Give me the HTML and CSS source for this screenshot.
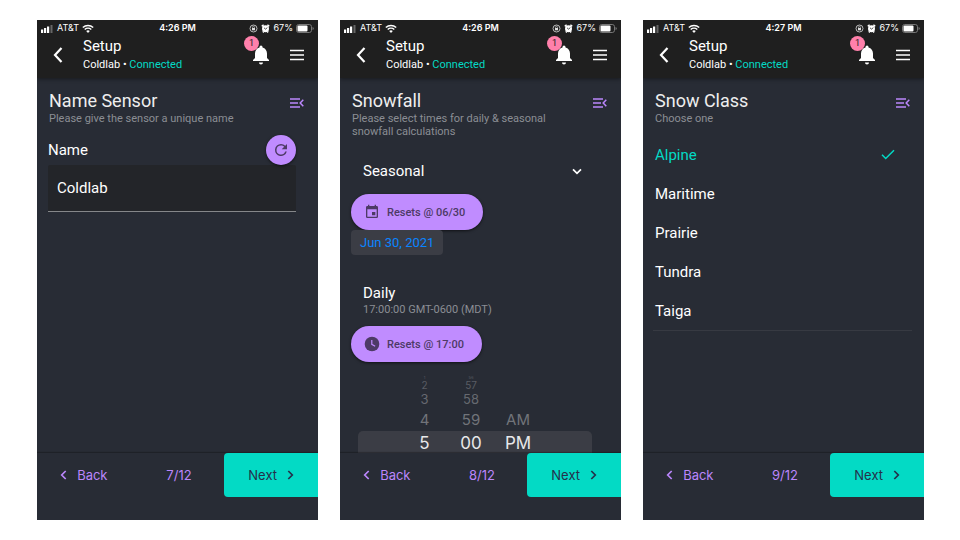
FILE: index.html
```html
<!DOCTYPE html>
<html lang="en">
<head>
<meta charset="utf-8">
<meta name="viewport" content="width=device-width, initial-scale=1">
<title>Coldlab Setup</title>
<link rel="stylesheet" href="styles.css">
</head>
<body>
<svg class="sprite" aria-hidden="true">
  <symbol id="signal" viewBox="0 0 13 9"><path fill="#fff" d="M0 5.500h2.200V9H0zM3 4h2.200v5H3zM6 2.500h2.200V9H6z"/><path fill="#666" d="M9.500 1h2v8h-2z"/></symbol>
  <symbol id="wifi" viewBox="0 0 12 9"><path d="M.8 3.600a7.600 7.600 0 0 1 10.400 0M2.700 5.500a4.900 4.900 0 0 1 6.600 0" fill="none" stroke="#fff" stroke-width="1.400"/><path fill="#fff" d="M4.200 7a2.700 2.700 0 0 1 3.600 0L6 8.900z"/></symbol>
  <symbol id="lock" viewBox="0 0 9 9"><circle cx="4.500" cy="4.500" r="3.500" fill="none" stroke="#ddd" stroke-width=".8"/><path fill="#ddd" d="M3 4h3v2.300H3z"/><path d="M3.600 4V3.200a.9.9 0 0 1 1.800 0V4" fill="none" stroke="#ddd" stroke-width=".6"/></symbol>
  <symbol id="alarm" viewBox="0 0 9 9"><circle cx="4.500" cy="4.800" r="3.500" fill="#fff"/><path d="M.8 2.400 2.600.8M8.200 2.400 6.400.8M1.800 8.400l.8-.8M7.200 8.400l-.8-.8" stroke="#fff" stroke-width="1.500"/><path d="M3 3.800l1.500 1.300L6.300 3.700" fill="none" stroke="#222" stroke-width=".8"/></symbol>
  <symbol id="battery" viewBox="0 0 18 9"><rect x=".5" y=".5" width="15" height="8" rx="2.200" fill="none" stroke="#777"/><rect x="1.500" y="1.500" width="10" height="6" rx="1" fill="#fff"/><path d="M16.600 3v3q1-.4 1-1.500t-1-1.500z" fill="#888"/></symbol>
  <symbol id="back" viewBox="0 0 10 18"><path d="M8.500 2 2 9l6.500 7" fill="none" stroke="#fff" stroke-width="2.200"/></symbol>
  <symbol id="bell" viewBox="0 0 16 20"><path fill="#fff" d="M8 19.500a2 2 0 0 0 2-2H6c0 1.100.9 2 2 2zM14 13V8.500c0-3-1.700-5.300-4.500-6V2a1.500 1.500 0 0 0-3 0v.5C3.700 3.200 2 5.500 2 8.500V13L0 15v1h16v-1z"/></symbol>
  <symbol id="menu" viewBox="0 0 14 12"><path d="M0 1.500h14M0 6h14M0 10.500h14" stroke="#fff" stroke-width="1.700"/></symbol>
  <symbol id="collapse" viewBox="0 0 14 10"><path d="M0 1h10M0 5h8M0 9h10M13.300 1.800 10.200 5l3.100 3.200" fill="none" stroke="#bb86fc" stroke-width="1.500"/></symbol>
  <symbol id="refresh" viewBox="0 0 24 24"><path fill="currentColor" d="M17.650 6.350A7.960 7.960 0 0 0 12 4a8 8 0 1 0 7.730 10h-2.080A6 6 0 1 1 12 6c1.660 0 3.140.69 4.220 1.780L13 11h7V4z"/></symbol>
  <symbol id="left" viewBox="0 0 7 10"><path d="M5.700 1 1.700 5l4 4" fill="none" stroke="currentColor" stroke-width="1.700"/></symbol>
  <symbol id="right" viewBox="0 0 7 10"><path d="m1.300 1 4 4-4 4" fill="none" stroke="currentColor" stroke-width="1.700"/></symbol>
  <symbol id="down" viewBox="0 0 10 7"><path d="m1 1.300 4 4 4-4" fill="none" stroke="#fff" stroke-width="1.700"/></symbol>
  <symbol id="event" viewBox="0 0 24 24"><path fill="currentColor" d="M17 12h-5v5h5zM16 1v2H8V1H6v2H5a2 2 0 0 0-2 2v14a2 2 0 0 0 2 2h14a2 2 0 0 0 2-2V5a2 2 0 0 0-2-2h-1V1zm3 18H5V8h14z"/></symbol>
  <symbol id="clock" viewBox="0 0 24 24"><circle cx="12" cy="12" r="11" fill="currentColor"/><path d="M11.700 6v6.500l5 3" fill="none" stroke="#c08cff" stroke-width="1.800"/></symbol>
  <symbol id="check" viewBox="0 0 14 11"><path d="m1 5.800 3.700 3.700L13 1.200" fill="none" stroke="#03dac5" stroke-width="1.500"/></symbol>
</svg>

<div class="screens">
  <section class="phone">
    <header class="top">
      <div class="status">
        <div class="carrier"><svg class="i-signal"><use href="#signal"/></svg><span>AT&amp;T</span><svg class="i-wifi"><use href="#wifi"/></svg></div>
        <span class="time">4:26 PM</span>
        <div class="power"><svg class="i-small"><use href="#lock"/></svg><svg class="i-small"><use href="#alarm"/></svg><span>67%</span><svg class="i-battery"><use href="#battery"/></svg></div>
      </div>
      <div class="appbar">
        <button class="icon-btn" aria-label="Go back"><svg class="i-back"><use href="#back"/></svg></button>
        <div class="device"><h1>Setup</h1><p>Coldlab • <span class="online">Connected</span></p></div>
        <button class="icon-btn bell" aria-label="Notifications"><svg class="i-bell"><use href="#bell"/></svg><span class="badge">1</span></button>
        <button class="icon-btn" aria-label="Menu"><svg class="i-menu"><use href="#menu"/></svg></button>
      </div>
    </header>
    <main class="content">
      <div class="head">
        <div><h2>Name Sensor</h2><p class="hint">Please give the sensor a unique name</p></div>
        <button class="icon-btn collapse" aria-label="Steps"><svg class="i-collapse"><use href="#collapse"/></svg></button>
      </div>
      <div class="field">
        <div class="field-row">
          <label for="sensor">Name</label>
          <button class="round" aria-label="Reset name"><svg class="i-refresh"><use href="#refresh"/></svg></button>
        </div>
        <input id="sensor" type="text" value="Coldlab">
      </div>
    </main>
    <footer class="steps">
      <button class="step"><svg class="i-side"><use href="#left"/></svg>Back</button>
      <span class="count">7/12</span>
      <button class="step next">Next<svg class="i-side"><use href="#right"/></svg></button>
    </footer>
  </section>

  <section class="phone">
    <header class="top">
      <div class="status">
        <div class="carrier"><svg class="i-signal"><use href="#signal"/></svg><span>AT&amp;T</span><svg class="i-wifi"><use href="#wifi"/></svg></div>
        <span class="time">4:26 PM</span>
        <div class="power"><svg class="i-small"><use href="#lock"/></svg><svg class="i-small"><use href="#alarm"/></svg><span>67%</span><svg class="i-battery"><use href="#battery"/></svg></div>
      </div>
      <div class="appbar">
        <button class="icon-btn" aria-label="Go back"><svg class="i-back"><use href="#back"/></svg></button>
        <div class="device"><h1>Setup</h1><p>Coldlab • <span class="online">Connected</span></p></div>
        <button class="icon-btn bell" aria-label="Notifications"><svg class="i-bell"><use href="#bell"/></svg><span class="badge">1</span></button>
        <button class="icon-btn" aria-label="Menu"><svg class="i-menu"><use href="#menu"/></svg></button>
      </div>
    </header>
    <main class="content">
      <div class="head">
        <div><h2>Snowfall</h2><p class="hint">Please select times for daily &amp; seasonal snowfall calculations</p></div>
        <button class="icon-btn collapse" aria-label="Steps"><svg class="i-collapse"><use href="#collapse"/></svg></button>
      </div>
      <div class="select">
        <select aria-label="Period"><option>Seasonal</option></select>
        <svg class="i-down"><use href="#down"/></svg>
      </div>
      <button class="pill"><svg class="i-pill"><use href="#event"/></svg>Resets @ 06/30</button>
      <button class="date">Jun 30, 2021</button>
      <div class="daily"><h3>Daily</h3><p class="hint">17:00:00 GMT-0600 (MDT)</p></div>
      <button class="pill"><svg class="i-pill"><use href="#clock"/></svg>Resets @ 17:00</button>
      <div class="picker" role="group" aria-label="Reset time">
        <div class="row r1"><span>1</span><span>56</span></div>
        <div class="row r2"><span>2</span><span>57</span></div>
        <div class="row r3"><span>3</span><span>58</span></div>
        <div class="row r4"><span>4</span><span>59</span><span>AM</span></div>
        <div class="row r5"><span>5</span><span>00</span><span>PM</span></div>
      </div>
    </main>
    <footer class="steps">
      <button class="step"><svg class="i-side"><use href="#left"/></svg>Back</button>
      <span class="count">8/12</span>
      <button class="step next">Next<svg class="i-side"><use href="#right"/></svg></button>
    </footer>
  </section>

  <section class="phone">
    <header class="top">
      <div class="status">
        <div class="carrier"><svg class="i-signal"><use href="#signal"/></svg><span>AT&amp;T</span><svg class="i-wifi"><use href="#wifi"/></svg></div>
        <span class="time">4:27 PM</span>
        <div class="power"><svg class="i-small"><use href="#lock"/></svg><svg class="i-small"><use href="#alarm"/></svg><span>67%</span><svg class="i-battery"><use href="#battery"/></svg></div>
      </div>
      <div class="appbar">
        <button class="icon-btn" aria-label="Go back"><svg class="i-back"><use href="#back"/></svg></button>
        <div class="device"><h1>Setup</h1><p>Coldlab • <span class="online">Connected</span></p></div>
        <button class="icon-btn bell" aria-label="Notifications"><svg class="i-bell"><use href="#bell"/></svg><span class="badge">1</span></button>
        <button class="icon-btn" aria-label="Menu"><svg class="i-menu"><use href="#menu"/></svg></button>
      </div>
    </header>
    <main class="content">
      <div class="head">
        <div><h2>Snow Class</h2><p class="hint">Choose one</p></div>
        <button class="icon-btn collapse" aria-label="Steps"><svg class="i-collapse"><use href="#collapse"/></svg></button>
      </div>
      <div class="options" role="radiogroup" aria-label="Snow Class">
        <label class="option"><input type="radio" name="snow" checked><span>Alpine</span><svg class="i-check"><use href="#check"/></svg></label>
        <label class="option"><input type="radio" name="snow"><span>Maritime</span><svg class="i-check"><use href="#check"/></svg></label>
        <label class="option"><input type="radio" name="snow"><span>Prairie</span><svg class="i-check"><use href="#check"/></svg></label>
        <label class="option"><input type="radio" name="snow"><span>Tundra</span><svg class="i-check"><use href="#check"/></svg></label>
        <label class="option"><input type="radio" name="snow"><span>Taiga</span><svg class="i-check"><use href="#check"/></svg></label>
      </div>
    </main>
    <footer class="steps">
      <button class="step"><svg class="i-side"><use href="#left"/></svg>Back</button>
      <span class="count">9/12</span>
      <button class="step next">Next<svg class="i-side"><use href="#right"/></svg></button>
    </footer>
  </section>
</div>
</body>
</html>
```
FILE: styles.css
```css
* { box-sizing: border-box; }
body {
  margin: 0;
  background: #fff;
  color: #fff;
  font-family: Roboto, "Liberation Sans", sans-serif;
}
h1, h2, h3, p { margin: 0; font-weight: 400; }
button, input, select { font-family: inherit; border: 0; padding: 0; margin: 0; }
button { background: none; color: inherit; cursor: pointer; }
svg { display: block; flex: none; }
.sprite { position: absolute; width: 0; height: 0; }

.screens {
  display: grid;
  grid-template-columns: repeat(3, minmax(0, 1fr));
  gap: 22px;
  min-height: 100vh;
  padding: 20px 36px 20px 37px;
}
.phone {
  display: flex;
  flex-direction: column;
  background: #282c35;
  overflow: hidden;
}
.status, .picker, .steps { font-family: Inter, "Liberation Sans", sans-serif; }

/* Header */
.top { background: #1f1f1f; box-shadow: 0 1px 4px rgba(0, 0, 0, .45); }
.status {
  display: grid;
  grid-template-columns: 1fr auto 1fr;
  align-items: center;
  height: 16px;
  padding: 0 4px;
  font-size: 9px;
  line-height: 16px;
}
.carrier, .power { display: flex; align-items: center; gap: 3px; }
.power { justify-content: flex-end; }
.time { font-weight: 600; }
.appbar {
  display: flex;
  align-items: center;
  height: 42px;
  padding: 0 14px 5px 16px;
}
.icon-btn { display: block; }
.device { flex: 1; padding: 2px 0 0 20px; }
.device h1 { font-size: 15px; line-height: 18px; }
.device p { font-size: 11px; line-height: 19px; }
.online { color: #03dac5; }
.bell { position: relative; margin-right: 21px; }
.badge {
  position: absolute;
  top: -9px;
  left: -9px;
  width: 15px;
  height: 15px;
  border-radius: 50%;
  background: #ff80ab;
  color: #222;
  font-size: 9px;
  line-height: 15px;
  text-align: center;
}

/* Content */
.content { flex: 1 1 0; min-height: 0; overflow: hidden; padding: 11px 11px 0; }
.head { display: flex; align-items: flex-start; justify-content: space-between; padding: 0 3px 0 1px; }
.head h2 { font-size: 18px; line-height: 23px; color: #eee; }
.hint { max-width: 210px; font-size: 11px; line-height: 13px; color: #8b8e94; }
.collapse { margin-top: 9px; }

.field { margin-top: 10px; padding-right: 11px; }
.field-row { display: flex; align-items: center; justify-content: space-between; }
.field label { font-size: 15px; }
.round {
  display: grid;
  place-items: center;
  width: 30px;
  height: 30px;
  border-radius: 50%;
  background: #c08cff;
  color: #4d3a66;
  box-shadow: 0 1px 3px rgba(0, 0, 0, .6);
}
.field input {
  display: block;
  width: 100%;
  height: 47px;
  padding: 0 9px;
  border-bottom: 1px solid #85878a;
  border-radius: 2px 2px 0 0;
  background: #232529;
  color: #fff;
  font-size: 15px;
}

.select { display: flex; align-items: center; margin: 21px 28px 11px 12px; }
.select select {
  flex: 1;
  height: 24px;
  appearance: none;
  background: none;
  color: #fff;
  font-size: 15px;
}
.pill {
  display: flex;
  align-items: center;
  gap: 7px;
  height: 36px;
  padding: 0 18px 0 13px;
  border-radius: 18px;
  background: #c08cff;
  color: #4d3a66;
  font-size: 11px;
  font-weight: 500;
  box-shadow: 0 1px 3px rgba(0, 0, 0, .6);
}
.date {
  display: block;
  height: 25px;
  padding: 0 9px;
  border-radius: 4px;
  background: #3b3d45;
  color: #0a84ff;
  font-size: 13px;
}
.daily { margin: 28px 0 10px 12px; }
.daily h3 { font-size: 15px; line-height: 20px; }

.picker { margin: 14px 18px 0 7px; color: #71747a; }
.row {
  display: grid;
  grid-template-columns: 55px 23px 11px 48px 46px 1fr;
  justify-items: center;
}
.row span:nth-child(1) { grid-column: 2; }
.row span:nth-child(2) { grid-column: 4; }
.row span:nth-child(3) { grid-column: 5; }
.r1 { height: 4px; font-size: 4px; line-height: 4px; color: #5a5d64; }
.r2 { height: 10px; font-size: 10px; line-height: 10px; color: #5a5d64; }
.r3 { height: 18px; font-size: 13px; line-height: 18px; color: #666970; }
.r4 { height: 23px; font-size: 15px; line-height: 23px; }
.r5 { height: 24px; border-radius: 5px 5px 0 0; background: #3b3d45; color: #e8e8ea; font-size: 17px; line-height: 24px; }

.options { margin: 10px 1px 0 -1px; border-bottom: 1px solid #373a42; }
.option {
  display: flex;
  align-items: center;
  justify-content: space-between;
  height: 39px;
  padding: 0 17px 0 2px;
  font-size: 15px;
  cursor: pointer;
}
.option input { position: absolute; opacity: 0; }
.option .i-check { visibility: hidden; }
.option:has(:checked) { color: #03dac5; }
.option:has(:checked) .i-check { visibility: visible; }

/* Footer */
.steps {
  display: grid;
  grid-template-columns: repeat(3, 1fr);
  align-items: center;
  padding-bottom: 23px;
  box-shadow: 0 -1px 1px rgba(0, 0, 0, .25);
  color: #bb86fc;
  font-size: 13px;
  text-align: center;
}
.count { padding-left: 3px; }
.step {
  display: flex;
  align-items: center;
  justify-content: center;
  gap: 10px;
  height: 44px;
  font-size: 13px;
}
.next { border-radius: 4px 0 0 4px; background: #03dac5; color: #25304a; }

/* Icon sizes */
.i-signal { width: 13px; height: 9px; }
.i-wifi { width: 12px; height: 9px; }
.i-small { width: 9px; height: 9px; }
.i-battery { width: 18px; height: 9px; }
.i-back { width: 10px; height: 18px; }
.i-bell { width: 16px; height: 20px; }
.i-menu { width: 14px; height: 12px; }
.i-collapse { width: 14px; height: 10px; }
.i-refresh { width: 18px; height: 18px; }
.i-side { width: 7px; height: 10px; }
.i-down { width: 10px; height: 7px; }
.i-pill { width: 16px; height: 16px; }
.i-check { width: 14px; height: 11px; }
```
